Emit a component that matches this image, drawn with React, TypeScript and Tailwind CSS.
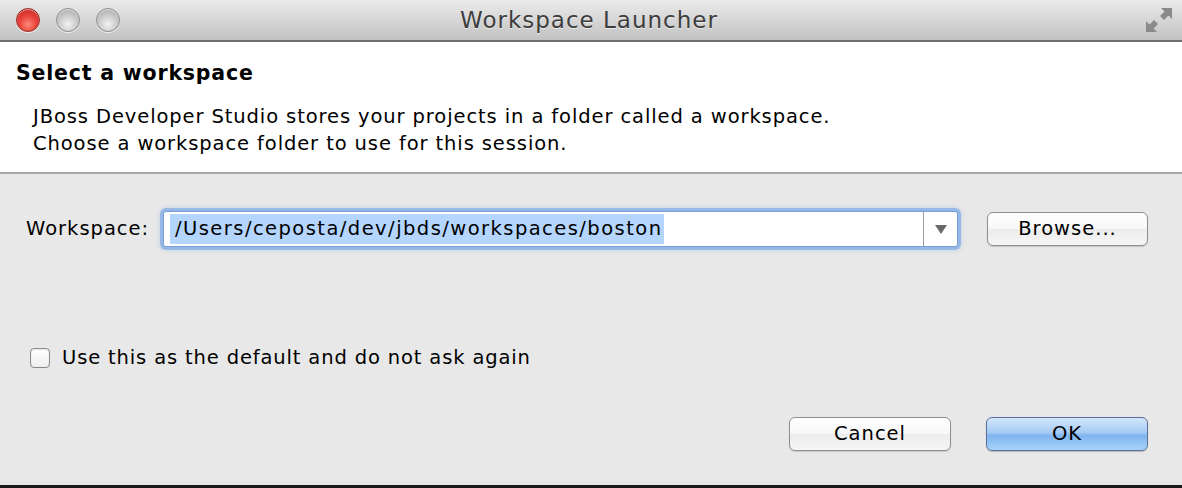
import React, { useState } from 'react';

const FONT = "font-['DejaVu_Sans','Liberation_Sans',sans-serif]";

const TrafficLight = ({ color }: { color: 'red' | 'gray' }) => (
  <div
    className={
      color === 'red'
        ? 'w-[24px] h-[24px] rounded-full border border-[#9a2a22] bg-[radial-gradient(circle_at_50%_70%,#ff8a7a_0%,#e8433a_45%,#b8231b_100%)] shadow-[inset_0_1px_1px_rgba(255,255,255,0.6),0_1px_1px_rgba(255,255,255,0.7)]'
        : 'w-[24px] h-[24px] rounded-full border border-[#8d8d8d] bg-[radial-gradient(circle_at_50%_70%,#f2f2f2_0%,#c9c9c9_50%,#9f9f9f_100%)] shadow-[inset_0_1px_1px_rgba(255,255,255,0.7),0_1px_1px_rgba(255,255,255,0.7)]'
    }
  />
);

export default function App() {
  const [checked, setChecked] = useState(false);

  return (
    <div className={`w-[1182px] h-[488px] flex flex-col bg-[#e8e8e8] overflow-hidden ${FONT}`}>
      {/* Title bar */}
      <div className="relative h-[42px] shrink-0 flex items-center px-[16px] bg-[linear-gradient(180deg,#ebebeb_0%,#d6d6d6_50%,#c2c2c2_100%)] border-b-2 border-[#6f6f6f]">
        <div className="flex items-center gap-[16px]">
          <TrafficLight color="red" />
          <TrafficLight color="gray" />
          <TrafficLight color="gray" />
        </div>
        <div className="flex-1 text-center text-[23px] tracking-[1px] text-[#3d3d3d] -ml-[108px] [text-shadow:0_1px_0_rgba(255,255,255,0.6)]">
          Workspace Launcher
        </div>
        {/* fullscreen arrows */}
        <svg width="30" height="28" viewBox="0 0 30 28" className="absolute right-[8px] top-[6px]">
          <path d="M17 2 H28 V13 L24.5 9.5 L20 14 L16 10 L20.5 5.5 Z" fill="#8a8a8a" />
          <path d="M13 26 H2 V15 L5.5 18.5 L10 14 L14 18 L9.5 22.5 Z" fill="#8a8a8a" />
        </svg>
      </div>

      {/* White header */}
      <div className="h-[132px] shrink-0 bg-white border-b-2 border-[#a8a8a8] px-[16px] pt-[16px]">
        <div className="text-[20.5px] tracking-[0.8px] font-bold text-black leading-[30px]">Select a workspace</div>
        <div className="pl-[17px] mt-[15px] text-[19.5px] tracking-[0.9px] leading-[27px] text-black">
          <div>JBoss Developer Studio stores your projects in a folder called a workspace.</div>
          <div>Choose a workspace folder to use for this session.</div>
        </div>
      </div>

      {/* Body */}
      <div className="flex-1 flex flex-col px-[26px] pt-[35px] text-[19.5px] tracking-[1px]">
        <div className="flex items-center h-[40px]">
          <span className="text-black w-[137px]">Workspace:</span>
          <div className="flex items-stretch w-[795px] h-[36px] bg-white border border-[#7a9fd6] rounded-[3px] shadow-[0_0_0_3px_rgba(110,160,230,0.55),0_0_4px_3px_rgba(110,160,230,0.35)]">
            <div className="flex-1 flex items-center pl-[2px]">
              <span className="bg-[#b4d5fe] text-black tracking-[1.45px] leading-[30px] pl-[5px] pr-[2px] border-l-[4px] border-white">
                /Users/ceposta/dev/jbds/workspaces/boston
              </span>
            </div>
            <div className="w-[34px] border-l border-[#9c9c9c] flex items-center justify-center">
              <svg width="12" height="9" viewBox="0 0 12 9">
                <path d="M0 0 H12 L6 9 Z" fill="#6a6a6a" />
              </svg>
            </div>
          </div>
          <button className="ml-[29px] w-[161px] h-[34px] rounded-[6px] border border-[#8e8e8e] bg-[linear-gradient(180deg,#ffffff_0%,#f7f7f7_50%,#ececec_51%,#f6f6f6_100%)] text-black shadow-[0_1px_1px_rgba(0,0,0,0.15)]">
            Browse...
          </button>
        </div>

        <label className="flex items-center mt-[97px] h-[24px] cursor-default">
          <span
            onClick={() => setChecked(!checked)}
            className="ml-[4px] w-[20px] h-[20px] rounded-[4px] border border-[#8a8a8a] bg-[linear-gradient(180deg,#ffffff_0%,#f0f0f0_100%)] shadow-[inset_0_1px_2px_rgba(0,0,0,0.1)] flex items-center justify-center text-[14px]"
          >
            {checked ? '✓' : ''}
          </span>
          <span className="ml-[12px] text-black tracking-[0.86px]">Use this as the default and do not ask again</span>
        </label>

        <div className="flex justify-end mt-[47px] pr-[8px] gap-[35px]">
          <button className="w-[162px] h-[34px] rounded-[6px] border border-[#8e8e8e] bg-[linear-gradient(180deg,#ffffff_0%,#f7f7f7_50%,#ececec_51%,#f6f6f6_100%)] text-black shadow-[0_1px_1px_rgba(0,0,0,0.15)]">
            Cancel
          </button>
          <button className="w-[162px] h-[34px] rounded-[6px] border border-[#5b6f9a] bg-[linear-gradient(180deg,#d4e6fb_0%,#a6cbf5_45%,#80b4f0_55%,#a7d3fa_100%)] text-black shadow-[0_1px_1px_rgba(0,0,0,0.2)]">
            OK
          </button>
        </div>
      </div>
      <div className="h-[3px] shrink-0 bg-[#1a1a1a]" />
    </div>
  );
}
